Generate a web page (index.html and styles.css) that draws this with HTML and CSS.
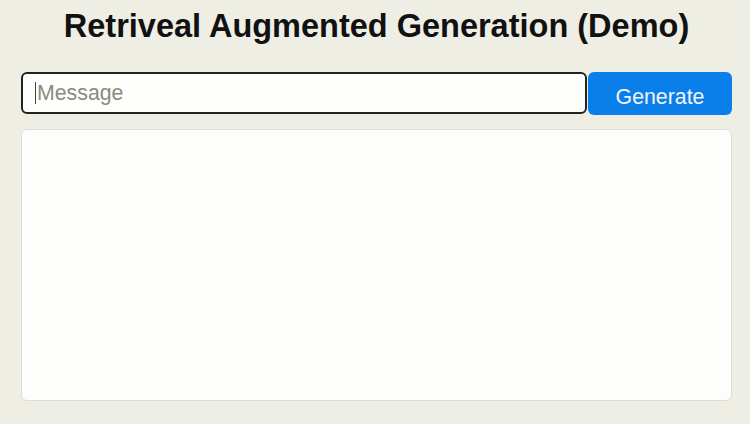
FILE: index.html
```html
<!DOCTYPE html>
<html lang="en">
<head>
<meta charset="utf-8">
<title>Retriveal Augmented Generation (Demo)</title>
<link rel="stylesheet" href="styles.css">
</head>
<body>
<main class="page">
  <h1 class="title">Retriveal Augmented Generation (Demo)</h1>
  <div class="prompt-row">
    <div class="message-box"><span class="caret"></span><span class="placeholder">Message</span></div>
    <button class="generate">Generate</button>
  </div>
  <section class="output"></section>
</main>
</body>
</html>
```
FILE: styles.css
```css
html, body {
  margin: 0;
  padding: 0;
  background: #eeeee4;
  font-family: "Liberation Sans", Arial, sans-serif;
}
.page {
  padding: 0 18px 0 21px;
  display: flex;
  flex-direction: column;
}
.title {
  margin: 8px 0 0;
  font-size: 32.5px;
  line-height: 37px;
  font-weight: bold;
  color: #111;
  text-align: center;
}
.prompt-row {
  margin-top: 27px;
  display: flex;
  align-items: flex-end;
  gap: 1px;
}
.message-box {
  flex: 1;
  height: 38px;
  border: 2px solid #222;
  border-radius: 6px;
  background: #fefefc;
  display: flex;
  align-items: center;
  padding-left: 12px;
  box-sizing: content-box;
  margin-bottom: 1px;
}
.caret {
  width: 1px;
  height: 22px;
  background: #444;
  margin-right: 1px;
}
.placeholder {
  font-size: 21.3px;
  color: #8a8a80;
}
.generate {
  width: 144px;
  height: 43px;
  border: none;
  border-radius: 6px;
  background: #0b7fe9;
  color: #f4f4ff;
  font-family: "Liberation Sans", Arial, sans-serif;
  font-size: 21.3px;
  line-height: 24px;
  padding: 13px 0 6px;
  box-sizing: border-box;
}
.output {
  margin-top: 14px;
  height: 270px;
  border: 1px solid #dcdce4;
  border-radius: 6px;
  background: #fdfdfb;
}
```
